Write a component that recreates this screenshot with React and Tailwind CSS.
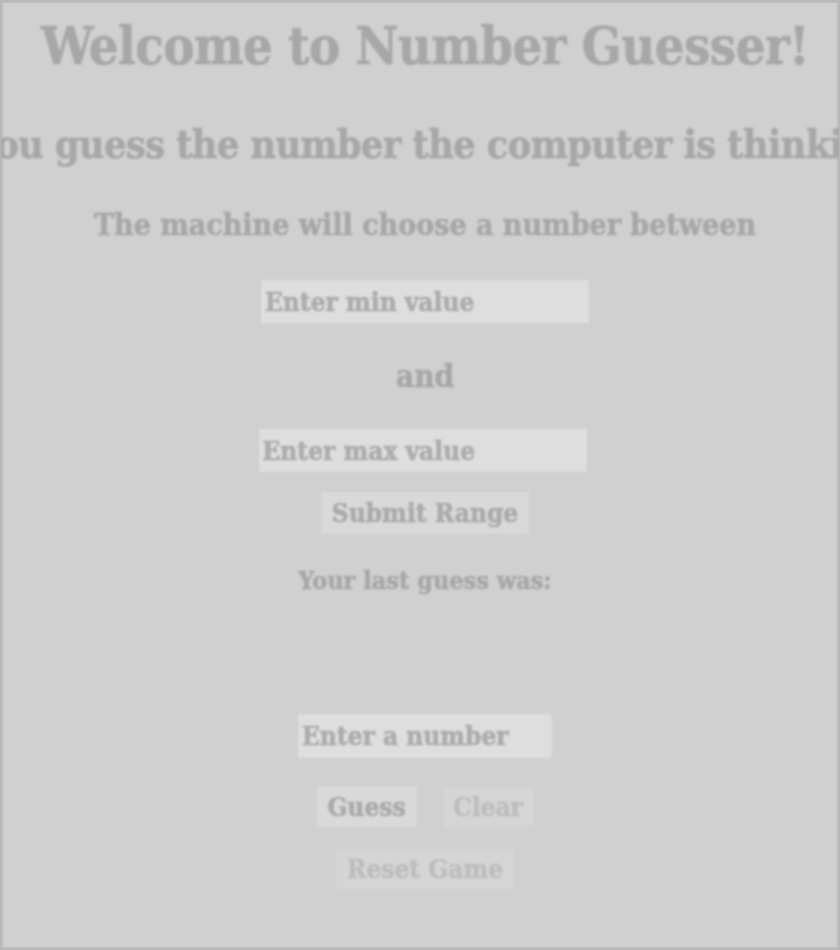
import React from 'react';

export default function App() {
  return (
    <div className="h-[950px] w-[840px] overflow-hidden bg-[#d0d0d0]">
      <div
        className="blur-[1px] h-[950px] w-[840px] border-2 border-[#a9a9a9] pl-[10px] flex flex-col items-center text-[#a7a7a7] font-bold overflow-hidden [-webkit-text-stroke:0.6px_#a7a7a7]"
        style={{ fontFamily: '"DejaVu Serif Condensed", "DejaVu Serif", serif' }}
      >
        <h1 className="mt-[14px] text-[52px] leading-[60px] whitespace-nowrap tracking-[-0.5px]">Welcome to Number Guesser!</h1>
        <h2 className="mt-[45px] text-[39px] leading-[46px] whitespace-nowrap tracking-[-0.5px]">Can you guess the number the computer is thinking of?</h2>
        <h3 className="mt-[40px] text-[30px] leading-[36px] whitespace-nowrap">The machine will choose a number between</h3>

        <input
          placeholder="Enter min value"
          className="mt-[37px] w-[328px] h-[43px] bg-[#dedede] px-1 text-[26px] placeholder:text-[#adadad] outline-none"
        />
        <p className="mt-[35px] text-[31px] leading-[36px]">and</p>
        <input
          placeholder="Enter max value"
          className="mt-[35px] mr-[5px] w-[328px] h-[43px] bg-[#dedede] px-1 text-[26px] placeholder:text-[#adadad] outline-none"
        />
        <button className="mt-[20px] w-[208px] h-[42px] bg-[#d9d9d9] text-[26px] text-[#ababab]">Submit Range</button>

        <p className="mt-[32px] text-[25px] leading-[30px]">Your last guess was:</p>
        <div className="h-[118px]" />

        <input
          placeholder="Enter a number"
          className="w-[254px] h-[44px] bg-[#dedede] px-1 text-[26px] placeholder:text-[#adadad] outline-none"
        />
        <div className="mt-[29px] flex gap-[26px]">
          <button className="w-[100px] h-[40px] bg-[#d9d9d9] text-[26px] text-[#ababab]">Guess</button>
          <button className="w-[91px] h-[40px] bg-[#d5d5d5] text-[26px] text-[#bdbdbd] [-webkit-text-stroke:0.6px_#bdbdbd]">Clear</button>
        </div>
        <button className="mt-[22px] w-[178px] h-[40px] bg-[#d5d5d5] text-[26px] text-[#bdbdbd] [-webkit-text-stroke:0.6px_#bdbdbd]">Reset Game</button>
      </div>
    </div>
  );
}
